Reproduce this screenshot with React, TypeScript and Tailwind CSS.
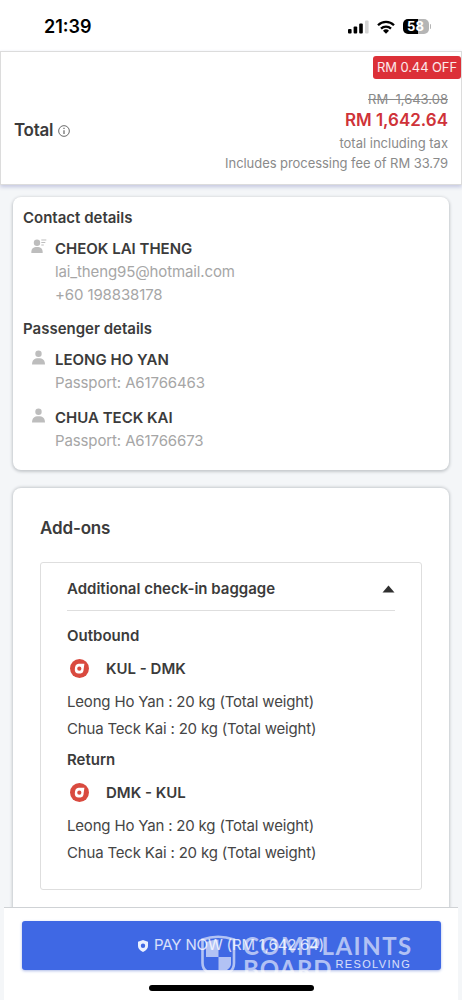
import { ReactNode } from 'react';
import { clsx } from 'clsx';

function SignalIcon() {
  return (
    <svg width="21" height="14" viewBox="0 0 21 14">
      <rect x="0" y="9" width="3.6" height="4.5" rx="1" fill="#000" />
      <rect x="5.6" y="6.5" width="3.6" height="7" rx="1" fill="#000" />
      <rect x="11.2" y="3.5" width="3.6" height="10" rx="1" fill="#000" />
      <rect x="17" y="0.5" width="3.6" height="13" rx="1" fill="#d4d4d4" />
    </svg>
  );
}

function WifiIcon() {
  return (
    <svg width="18" height="14" viewBox="0 0 18 14">
      <g fill="none" stroke="#000" strokeWidth="2.3">
        <path d="M1 5.2a11.4 11.4 0 0 1 16 0" />
        <path d="M4 8.6a7.2 7.2 0 0 1 10 0" />
      </g>
      <path d="M9 13.7 6 10.7a4.4 4.4 0 0 1 6 0z" fill="#000" />
    </svg>
  );
}

function Battery() {
  return (
    <div className="flex items-center gap-px">
      <div className="flex h-[15px] w-[26px] items-center justify-center rounded-[5px] bg-linear-to-r from-black from-58% to-[#b5b5b5] to-58% text-[13px] font-bold text-white">
        58
      </div>
      <div className="h-[5px] w-[1.5px] rounded-r bg-[#b5b5b5]" />
    </div>
  );
}

function PersonIcon({ contact = false }: { contact?: boolean }) {
  return (
    <svg width="16" height="15" viewBox="0 0 16 15" fill="#bdbdbd">
      <circle cx={contact ? 6 : 7.5} cy="3.7" r="3.2" />
      <path
        d={contact
          ? 'M0.3 14c0-4.5 2-5.900 5.700-5.900s5.700 1.400 5.700 5.900z'
          : 'M1 14.500c0-4.300 2.300-6.200 6.500-6.200s6.500 1.900 6.500 6.200z'}
      />
      {contact && (
        <path d="M10.3 1h5M10.3 3.5h4M10.3 6h2.5" stroke="#bdbdbd" strokeWidth="1.1" />
      )}
    </svg>
  );
}

function AirlineIcon() {
  return (
    <svg width="19" height="19" viewBox="0 0 19 19">
      <circle cx="9.5" cy="9.5" r="9.5" fill="#d94a3f" />
      <path
        d="M8.6 4.8h5.8l-1 7.2q-.4 2.4-2.8 2.4H8.5q-3.700 0-3.700-3.600 0-6 3.800-6z"
        fill="#fff"
      />
      <circle cx="9.3" cy="9.700" r="2.1" fill="#d94a3f" />
    </svg>
  );
}

interface PersonProps {
  name: string;
  contact?: boolean;
  children: ReactNode;
  className?: string;
}

function Person({ name, contact, children, className }: PersonProps) {
  return (
    <div className={clsx('flex', className)}>
      <div className="w-[24px] shrink-0 pt-[2px]">
        <PersonIcon contact={contact} />
      </div>
      <div className="text-[15px] leading-[23px] tracking-[-0.12px] text-[#a6a6a6]">
        <p className="font-semibold tracking-normal text-[#3b3b3b]">{name}</p>
        {children}
      </div>
    </div>
  );
}

interface LegProps {
  title: string;
  route: string;
}

function BaggageLeg({ title, route }: LegProps) {
  return (
    <div className="text-[15px] leading-[27px] text-[#454545]">
      <h4 className="h-[28px] font-semibold text-[#3b3b3b]">{title}</h4>
      <div className="mb-[2px] flex h-[36px] items-center pl-[3px]">
        <AirlineIcon />
        <span className="ml-[17px] font-semibold text-[#3b3b3b]">{route}</span>
      </div>
      <p className="tracking-[-0.18px]">Leong Ho Yan : 20 kg (Total weight)</p>
      <p className="tracking-[-0.18px]">Chua Teck Kai : 20 kg (Total weight)</p>
    </div>
  );
}

function Watermark() {
  return (
    <div className="pointer-events-none absolute top-[935px] left-[201px] flex h-[38px] overflow-hidden text-white/60">
      <svg width="36" height="44" viewBox="0 0 36 44">
        <path d="M1.500 4.500Q17 -1 33 4.500V28Q33 34 29 36.500H6Q1.500 34 1.500 28Z" fill="none" stroke="currentColor" strokeWidth="2.600" />
        <path d="M5 7Q11 4.500 17.500 4.500V22H5ZM17.500 22H30V29Q30 32 26 35H17.500Z" fill="currentColor" />
      </svg>
      <div className="ml-[6px] font-[Lato,sans-serif] font-bold">
        <p className="h-[23px] text-[24px] leading-[22px] tracking-[1.5px]">COMPLAINTS</p>
        <div className="flex">
          <span className="text-[24px] leading-[22px] tracking-[0.9px]">BOARD</span>
          <span className="ml-[3px] font-['Liberation_Sans'] text-[11px] leading-[12px] font-normal tracking-[1.35px] text-white/80">
            RESOLVING
          </span>
        </div>
      </div>
    </div>
  );
}

export default function App() {
  return (
    <div className="relative flex h-[1000px] w-[462px] flex-col overflow-hidden bg-[#f4f6f8] font-[Inter,sans-serif] text-[#3b3b3b]">
      <header className="flex h-[51px] shrink-0 items-center justify-between bg-white pt-[2px] pr-[31px] pl-[44px]">
        <span className="text-[18px] font-semibold text-black">21:39</span>
        <div className="flex items-center gap-[8px]">
          <SignalIcon />
          <WifiIcon />
          <Battery />
        </div>
      </header>

      <section className="relative z-10 flex h-[134px] shrink-0 justify-between border border-[#dcdcdc] bg-white pl-[13px] shadow-[0_2px_4px_#c3c7e0]">
        <div className="flex items-center gap-[5px] pt-[25px]">
          <h1 className="text-[17px] font-semibold tracking-[-0.3px]">Total</h1>
          <svg width="12" height="12" viewBox="0 0 11 11" fill="none" stroke="#555">
            <circle cx="5.5" cy="5.5" r="4.9" strokeWidth="0.8" />
            <path d="M5.5 4.7v3.600M5.500 2.500v1.100" />
          </svg>
        </div>
        <div className="flex flex-col items-end text-[13px] text-[#8a8a8a]">
          <div className="mt-[4px] flex h-[23px] w-[88px] items-center justify-center rounded-[3px] bg-[#dc3038] text-[13px] tracking-[-0.1px] whitespace-nowrap text-white/90">
            RM 0.44 OFF
          </div>
          <div className="flex flex-col items-end pt-[11px] pr-[13px]">
            <p className="h-[19px] leading-[19px] line-through">RM&nbsp; 1,643.08</p>
            <p className="h-[23px] text-[17px] leading-[22px] font-semibold text-[#cf3239]">RM 1,642.64</p>
            <p className="leading-[23px]">total including tax</p>
            <p className="leading-[16px] tracking-[-0.06px]">Includes processing fee of RM 33.79</p>
          </div>
        </div>
      </section>

      <main className="flex h-[722px] shrink-0 flex-col gap-[18px] overflow-hidden pt-[12px] pr-[13px] pl-[13px]">
        <section className="h-[273px] shrink-0 rounded-[8px] bg-white px-[10px] pt-[9px] shadow-[0_1px_3px_1px_#c5c9cd]">
          <h2 className="text-[15px] leading-[24px] font-semibold">Contact details</h2>
          <Person name="CHEOK LAI THENG" contact className="mt-[7px] pl-[8px]">
            <p>lai_theng95@hotmail.com</p>
            <p>+60 198838178</p>
          </Person>
          <h2 className="mt-[11px] text-[15px] leading-[24px] font-semibold">Passenger details</h2>
          <Person name="LEONG HO YAN" className="mt-[7px] pl-[8px]">
            <p>Passport: A61766463</p>
          </Person>
          <Person name="CHUA TECK KAI" className="mt-[12px] pl-[8px]">
            <p>Passport: A61766673</p>
          </Person>
        </section>

        <section className="h-[450px] shrink-0 rounded-t-[8px] bg-white px-[27px] pt-[27px] shadow-[0_0_3px_1px_#c5c9cd]">
          <h2 className="text-[17px] leading-[26px] font-semibold tracking-[-0.15px]">Add-ons</h2>
          <div className="mt-[21px] h-[328px] rounded-[3px] border border-[#dedede] px-[26px]">
            <div className="mb-[11px] flex h-[48px] items-center justify-between border-b border-[#dedede] pt-[5px]">
              <h3 className="text-[15px] font-semibold">Additional check-in baggage</h3>
              <svg width="13" height="8" viewBox="0 0 12 8">
                <path d="M6 0.5 12 7.500H0z" fill="#303030" />
              </svg>
            </div>
            <BaggageLeg title="Outbound" route="KUL - DMK" />
            <div className="h-[4px]" />
            <BaggageLeg title="Return" route="DMK - KUL" />
          </div>
        </section>
      </main>

      <footer className="mx-[4px] flex h-[93px] shrink-0 flex-col items-center border-t border-[#cfd2d5] bg-white pt-[13px]">
        <button className="flex h-[49px] w-[419px] items-center justify-center gap-[6px] rounded-[3px] bg-[#3f68e4] text-[15px] tracking-[-0.15px] text-white/80 shadow-[0_1px_3px_#aebbe8]">
          <svg width="10" height="12" viewBox="0 0 10 12">
            <path
              d="M5 0 10 1.7V6Q10 9.5 5 12Q0 9.5 0 6V1.7ZM5 3.5a2.2 2.2 0 1 0 0 4.4 2.2 2.2 0 1 0 0-4.400Z"
              fill="#eaf0ff"
              fillRule="evenodd"
            />
          </svg>
          PAY NOW (RM 1,642.64)
        </button>
        <div className="mt-[15px] h-[6px] w-[165px] rounded-full bg-black" />
      </footer>

      <Watermark />
    </div>
  );
}
